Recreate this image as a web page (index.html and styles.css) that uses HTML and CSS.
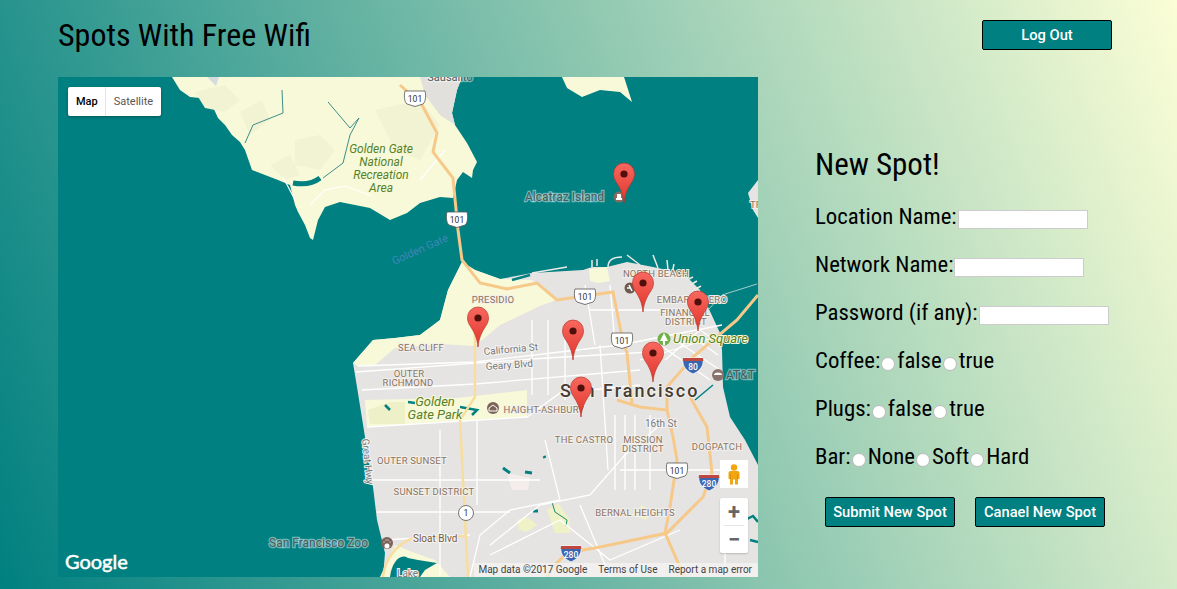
FILE: index.html
```html
<!DOCTYPE html>
<html lang="en">
<head>
  <meta charset="UTF-8">
  <meta name="viewport" content="width=device-width, initial-scale=1.0">
  <title>Spots With Free Wifi</title>
  <link rel="stylesheet" href="styles.css">
</head>
<body>
  <header class="top-bar">
    <h1 class="page-title">Spots With Free Wifi</h1>
    <button type="button" class="btn btn-logout">Log Out</button>
  </header>
  <main class="content">
    <section class="map">
      <svg class="map-canvas" viewBox="58 77 700 500" width="700" height="500" xmlns="http://www.w3.org/2000/svg">
        <defs>
          <linearGradient id="pinFill" x1="0" y1="0" x2="0" y2="1">
            <stop offset="0" stop-color="#f8685f"/>
            <stop offset="1" stop-color="#e0352b"/>
          </linearGradient>
          <g id="pin">
            <path d="M0 40C-1 30-4 25-7.500 19.500C-9.500 16.500-10.500 14-10.500 10.500A10.500 10.500 0 0 1 10.500 10.500C10.500 14 9.500 16.500 7.500 19.500C4 25 1 30 0 40Z" fill="url(#pinFill)" stroke="#b8352c" stroke-width=".7"/>
            <circle cx="0" cy="11" r="3.600" fill="#4f0f0c"/>
          </g>
          <g id="us101">
            <path d="M-10-7H10C11-4 11 4 8 6L0 8.500L-8 6C-11 4-11-4-10-7Z" fill="#fff" stroke="#555" stroke-width=".8"/>
            <text class="shield-text" y="3.500">101</text>
          </g>
          <g id="inter">
            <path d="M-10-7H10C11-1 9 5 0 9C-9 5-11-1-10-7Z" fill="#3a66b0" stroke="#fff" stroke-width=".8"/>
            <path d="M-10-7H10L10.300-4H-10.300Z" fill="#c0473f"/>
          </g>
        </defs>

        <rect x="58" y="77" width="700" height="500" fill="#008080"/>

        <!-- marin headlands -->
        <path d="M172 77L180 90L190 97L200 98L212 105L218 118L225 125L232 135L240 142L245 150L252 170L265 175L278 180L290 185L295 205L298 212L305 225L310 238L313 240L318 220L325 207L340 202L370 208L390 220L407 213L420 203L440 197L453 198L457 180L463 172L472 178L473 170L477 162L467 143L455 125L452 113L457 90L462 77Z" fill="#f8f9d8"/>
        <path d="M195 92L225 85L240 100L225 112L205 108ZM240 112L262 100L270 120L250 135ZM295 140L320 135L335 150L320 170L295 165ZM375 110L420 100L440 125L420 160L395 150ZM270 165L290 155L300 175L285 180Z" fill="#f2f3d2"/>
        <path d="M420 77H462L457 90L452 113L455 125L440 115L425 95Z" fill="#e1e0dd"/>
        <path d="M283 177L295 200M310 205L325 190L345 186L372 196M420 180L445 150" stroke="#fff" stroke-width="1.200" fill="none"/>
        <path d="M293 183Q310 186 320 178" stroke="#008080" stroke-width="5" fill="none"/>
        <path d="M282 90L283 113L253 125L245 143M328 102L350 128L359 118L350 135L343 163L323 178" stroke="#3e8e8a" stroke-width="1" fill="none"/>

        <!-- angel island, treasure island edge -->
        <path d="M562 77L567 88L582 97L600 90L620 92L632 102L625 80L624 77Z" fill="#f8f9d8"/>
        <path d="M758 180L748 193L753 210L758 218Z" fill="#e6e4e2"/>
        <path d="M207 77L216 86L219 77Z" fill="#d5dce0"/>

        <!-- san francisco land -->
        <path d="M462 262L475 270L500 279L532 273L583 270L592 267L607 267L627 262L653 267L667 270L687 277L700 290L708 307L720 333L722 350L723 387L730 417L745 440L758 465V577H383L385 553L377 520L373 487L365 437L357 387L353 363L373 340L395 338L420 335L440 320L448 290Z" fill="#e6e4e2"/>
        <path d="M462 262L475 270L500 279L532 280L556 300L540 306L500 325L475 346L440 344L395 348L375 365L358 366L353 363L373 340L395 338L420 335L440 320L448 290Z" fill="#f8f9d8"/>
        <path d="M589 269L607 267L610 281L598 283L590 281Z" fill="#f8f9d8"/>
        <path d="M365 400L457 398L527 390L527 417L367 427Z" fill="#f8f9d8"/>
        <path d="M368 410L390 402H405V424H370Z" fill="#eef0c8"/>
        <path d="M385 405L390 410M408 402L415 403M460 407L477 410L472 415" stroke="#008080" stroke-width="2.500" fill="none"/>
        <path d="M507 473L530 478L528 490L512 490Z" fill="#f4edec"/>
        <path d="M517 520L527 517L537 525L527 532L519 530ZM547 510L558 503L570 520L570 533L555 533Z" fill="#eff2c6"/>
        <path d="M632 515L642 505L652 512L646 520Z" fill="#eff2c6"/>
        <path d="M503 468L510 473M525 472L532 473M544 456L545 458M533 511L538 511" stroke="#008080" stroke-width="3" fill="none"/>
        <path d="M552 502L555 512L567 520L566 526" stroke="#1d8c70" stroke-width="1" fill="none"/>
        <path d="M395 545L380 577H450L435 560L415 553Z" fill="#f8f9d8"/>
        <path d="M390 577C392 562 400 553 408 558L418 560L437 563L425 570L420 577Z" fill="#008080"/>

        <!-- water inlets and piers -->
        <path d="M512 280L530 275" stroke="#008080" stroke-width="2.500" fill="none"/>
        <path d="M695 400L713 385" stroke="#008080" stroke-width="1.500" fill="none"/>
        <path d="M745 520l8-4l5 6M750 540l8 2" stroke="#008080" stroke-width="2.500" fill="none"/>
        <path d="M532 273L567 267M592 267V260M597 266V259M608 267C608 260 613 257 622 257M627 255L640 265M653 255L658 268M667 260L668 270M674 264L672 274M687 280L693 277M690 285L697 281M694 290L701 286" stroke="#eceae8" stroke-width="1.500" fill="none"/>
        <path d="M708 310L722 295L757 284" stroke="#cfe0e0" stroke-width=".8" fill="none"/>

        <!-- surface streets -->
        <g class="street">
          <path d="M358 366L475 362L560 352L620 345L722 325"/>
          <path d="M356 372L547 358L650 352"/>
          <path d="M362 390L475 384L640 370"/>
          <path d="M367 427L527 417L560 393L640 385"/>
          <path d="M372 480H540"/>
          <path d="M377 512H510"/>
          <path d="M383 540L470 535"/>
          <path d="M477 420V505M440 430V575M532 320V395"/>
          <path d="M548 320V395M565 340V400M600 345L608 470"/>
          <path d="M490 545L540 505L590 495L625 455L660 425"/>
          <path d="M490 555L560 520L610 560L680 530"/>
          <path d="M545 440L560 500L510 510L480 535L470 577"/>
          <path d="M620 470H725M615 415V490M625 415V490M635 415V490M650 415V490"/>
          <path d="M640 360L722 335M660 345L710 380M675 340L720 370M690 335L718 355M700 330L722 345M665 360L700 330"/>
          <path d="M585 285L595 345M610 285L615 345M590 310H660"/>
          <path d="M725 500V577M580 505L610 577"/>
        </g>

        <!-- highways -->
        <g class="highway">
          <path d="M400 85L422 105L437 133L433 152L453 178L458 230L462 260L480 283L507 289L537 283L557 300L613 292L622 337L627 353L632 403"/>
          <path d="M617 400L640 407L667 410L673 437L677 460L670 507L665 533L680 567L685 577"/>
          <path d="M758 295L737 320L693 357L667 387L667 410"/>
          <path d="M690 397L707 427L712 473L703 497L667 533L600 547L567 553L553 567L547 577"/>
        </g>
        <path class="highway-minor" d="M475 320V397L460 420L468 577M383 577C385 560 395 545 413 538L467 536"/>

        <!-- place labels -->
        <text class="hood" x="493" y="303" text-anchor="middle">PRESIDIO</text>
        <text class="hood" x="421" y="351" text-anchor="middle">SEA CLIFF</text>
        <text class="hood" x="409" y="377" text-anchor="middle">OUTER</text>
        <text class="hood" x="408" y="386" text-anchor="middle">RICHMOND</text>
        <text class="hood" x="412" y="464" text-anchor="middle">OUTER SUNSET</text>
        <text class="hood" x="434" y="495" text-anchor="middle">SUNSET DISTRICT</text>
        <text class="hood" x="544" y="413" text-anchor="middle">HAIGHT-ASHBURY</text>
        <text class="hood" x="584" y="443" text-anchor="middle">THE CASTRO</text>
        <text class="hood" x="643" y="443" text-anchor="middle">MISSION</text>
        <text class="hood" x="643" y="452" text-anchor="middle">DISTRICT</text>
        <text class="hood" x="717" y="450" text-anchor="middle">DOGPATCH</text>
        <text class="hood" x="635" y="516" text-anchor="middle">BERNAL HEIGHTS</text>
        <text class="hood" x="656" y="277" text-anchor="middle">NORTH BEACH</text>
        <text class="hood" x="692" y="303" text-anchor="middle">EMBARCADERO</text>
        <text class="hood" x="685" y="316" text-anchor="middle">FINANCIAL</text>
        <text class="hood" x="686" y="325" text-anchor="middle">DISTRICT</text>
        <text class="hood" x="750" y="208">TR</text>
        <text class="street-name" x="484" y="355" transform="rotate(-5 484 355)">California St</text>
        <text class="street-name" x="486" y="370" transform="rotate(-4 486 370)">Geary Blvd</text>
        <text class="street-name" x="645" y="427">16th St</text>
        <text class="street-name" x="362" y="439" transform="rotate(84 362 439)">Great Hwy</text>
        <text class="street-name dark" x="413" y="542">Sloat Blvd</text>
        <text class="park" x="381" y="153" text-anchor="middle">Golden Gate</text>
        <text class="park" x="381" y="166" text-anchor="middle">National</text>
        <text class="park" x="381" y="179" text-anchor="middle">Recreation</text>
        <text class="park" x="381" y="192" text-anchor="middle">Area</text>
        <text class="park park-big" x="435" y="406" text-anchor="middle">Golden</text>
        <text class="park park-big" x="435" y="419" text-anchor="middle">Gate Park</text>
        <text class="park park-big" x="673" y="343">Union Square</text>
        <text class="water-name" x="394" y="265" transform="rotate(-24 394 265)">Golden Gate</text>
        <text class="poi" x="525" y="201">Alcatraz Island</text>
        <text class="poi" x="269" y="547">San Francisco Zoo</text>
        <text class="poi" x="726" y="379">AT&amp;T</text>
        <text class="city" x="560" y="397">San Francisco</text>
        <text class="poi poi-small" x="450" y="81" text-anchor="middle">Sausalito</text>
        <text class="street-name" x="397" y="577">Lake</text>

        <!-- poi icons -->
        <circle cx="619" cy="197" r="5.500" fill="#8a6a5e"/>
        <path d="M616 200H622V198H621V194H617V198H616Z" fill="#fff"/>
        <circle cx="630" cy="288" r="5.500" fill="#6f5a50"/>
        <path d="M627 288h3M629 285l3 6" stroke="#fff" stroke-width="1.500"/>
        <circle cx="493" cy="408" r="6" fill="#7c6358"/>
        <path d="M489 408L493 405L497 408V411H489Z" fill="none" stroke="#fff" stroke-width="1"/>
        <circle cx="387" cy="543" r="6" fill="#7c6358"/>
        <path d="M387 544a2 2 0 1 0 .01 0M384 542h.1M386 540h.1M388 540h.1M390 542h.1" fill="#fff" stroke="#fff" stroke-width="1.200" stroke-linecap="round"/>
        <circle cx="718" cy="375" r="6" fill="#8a736a"/>
        <path d="M714 375a4 2.500 0 0 1 8 0Z" fill="#fff"/>
        <circle cx="664" cy="339" r="6.500" fill="#6fb24a"/>
        <path d="M664 333L668 341H665V345H663V341H660Z" fill="#fff"/>

        <!-- shields -->
        <use href="#us101" x="415" y="98"/>
        <use href="#us101" x="457" y="219"/>
        <use href="#us101" x="585" y="296"/>
        <use href="#us101" x="622" y="340"/>
        <use href="#us101" x="677" y="470"/>
        <circle cx="466" cy="513" r="7.500" fill="#fff" stroke="#555" stroke-width=".8"/>
        <text class="shield-text" x="466" y="516">1</text>
        <use href="#inter" x="693" y="365"/>
        <text class="shield-text white" x="693" y="369.500">80</text>
        <use href="#inter" x="709" y="482"/>
        <text class="shield-text white" x="709" y="486.500">280</text>
        <use href="#inter" x="571" y="553"/>
        <text class="shield-text white" x="571" y="557.500">280</text>

        <!-- markers, tip of each pin is the location -->
        <use href="#pin" x="624" y="163"/>
        <use href="#pin" x="643" y="272"/>
        <use href="#pin" x="698" y="291"/>
        <use href="#pin" x="478" y="307"/>
        <use href="#pin" x="573" y="320"/>
        <use href="#pin" x="653" y="342"/>
        <use href="#pin" x="581" y="377"/>

        <text class="google" x="65" y="569">Google</text>
      </svg>

      <div class="map-type">
        <span class="map-type-item active">Map</span>
        <span class="map-type-item">Satellite</span>
      </div>
      <div class="pegman">
        <svg width="12" height="21" viewBox="0 0 12 21" xmlns="http://www.w3.org/2000/svg">
          <circle cx="6" cy="3.500" r="3.200" fill="#f2a50f"/>
          <path d="M2.500 7H9.500C11 7 11.500 8 11.500 9.500V15H10V20.500H7V15.500H5V20.500H2V15H.5V9.500C.5 8 1 7 2.500 7Z" fill="#f2a50f"/>
          <path d="M2.500 10V15M9.500 10V15" stroke="#c4820a" stroke-width=".6"/>
        </svg>
      </div>
      <div class="zoom-box">
        <span class="zoom-btn">+</span>
        <span class="zoom-line"></span>
        <span class="zoom-btn">&minus;</span>
      </div>
      <div class="map-footer">
        <span>Map data ©2017 Google</span>
        <span>Terms of Use</span>
        <span>Report a map error</span>
      </div>
    </section>

    <form class="spot-form">
      <h2 class="form-title">New Spot!</h2>
      <div class="form-row">Location Name:<input type="text" class="text-field"></div>
      <div class="form-row">Network Name:<input type="text" class="text-field"></div>
      <div class="form-row">Password (if any):<input type="text" class="text-field"></div>
      <div class="form-row">Coffee:<input type="radio" name="coffee" class="radio">false<input type="radio" name="coffee" class="radio">true</div>
      <div class="form-row">Plugs:<input type="radio" name="plugs" class="radio">false<input type="radio" name="plugs" class="radio">true</div>
      <div class="form-row">Bar:<input type="radio" name="bar" class="radio">None<input type="radio" name="bar" class="radio">Soft<input type="radio" name="bar" class="radio">Hard</div>
      <div class="form-buttons">
        <button type="button" class="btn">Submit New Spot</button>
        <button type="button" class="btn">Canael New Spot</button>
      </div>
    </form>
  </main>
</body>
</html>
```

FILE: styles.css
```css
html, body {
  height: 100%;
}
body {
  margin: 0;
  overflow: hidden;
  font-family: Roboto, sans-serif;
  font-stretch: 75%;
  color: #000;
  background: linear-gradient(70deg, #008080, #fbfed6);
}
.top-bar {
  display: flex;
  justify-content: space-between;
  align-items: flex-start;
  height: 77px;
  padding: 0 65px 0 58px;
  box-sizing: border-box;
}
.page-title {
  margin: 14px 0 0;
  font-size: 32px;
  font-stretch: 85%;
  line-height: 42px;
  font-weight: 400;
}
.btn {
  width: 130px;
  height: 30px;
  padding: 0;
  background-color: #008080;
  color: #fff;
  border: 1px solid #000;
  border-radius: 2px;
  font-family: Roboto, sans-serif;
  font-stretch: 100%;
  font-size: 14.700px;
  font-weight: 500;
  cursor: pointer;
}
.btn-logout {
  margin-top: 20px;
}
.content {
  display: flex;
  padding-left: 58px;
}
.map {
  position: relative;
  width: 700px;
  height: 500px;
  overflow: hidden;
  flex-shrink: 0;
  font-stretch: 100%;
}
.map-canvas {
  display: block;
  font-family: Roboto, sans-serif;
}
.street path {
  fill: none;
  stroke: #fff;
  stroke-width: 1.300;
}
.highway path {
  fill: none;
  stroke: #f6c98a;
  stroke-width: 3;
}
.highway-minor {
  fill: none;
  stroke: #f7dd9f;
  stroke-width: 2.500;
}
.hood {
  font-size: 9.500px;
  fill: #8b735f;
  stroke: #f2f0ec;
  stroke-width: 2px;
  paint-order: stroke;
  letter-spacing: .2px;
}
.street-name {
  font-size: 10px;
  fill: #777;
  stroke: #f5f5f5;
  stroke-width: 2px;
  paint-order: stroke;
}
.street-name.dark {
  fill: #7a5a35;
}
.park {
  font-size: 12px;
  font-style: italic;
  fill: #56822a;
}
.park-big {
  font-size: 13px;
  stroke: #f8f9d8;
  stroke-width: 2px;
  paint-order: stroke;
}
.water-name {
  font-size: 11px;
  fill: #3f86b8;
}
.poi {
  font-size: 12px;
  fill: #4f5a5a;
  stroke: rgba(255, 255, 255, 0.45);
  stroke-width: 2.500px;
  paint-order: stroke;
}
.poi-small {
  font-size: 11px;
}
.city {
  font-size: 18px;
  font-weight: 500;
  letter-spacing: 2px;
  fill: #463c34;
  stroke: #f2f0ec;
  stroke-width: 2px;
  paint-order: stroke;
}
.shield-text {
  font-size: 8.500px;
  fill: #333;
  text-anchor: middle;
}
.shield-text.white {
  font-weight: 500;
  fill: #fff;
}
.google {
  font-family: Lato, sans-serif;
  font-size: 20px;
  font-weight: 400;
  fill: #fff;
  stroke: #fff;
  stroke-width: .5px;
}
.map-type {
  position: absolute;
  left: 10px;
  top: 10px;
  display: flex;
  height: 29px;
  background: #fff;
  border-radius: 2px;
  font-family: Roboto, sans-serif;
  font-size: 11px;
  line-height: 29px;
  box-shadow: 0 1px 3px rgba(0, 0, 0, 0.3);
}
.map-type-item {
  padding: 0 8px;
  color: #565656;
}
.map-type-item.active {
  color: #000;
  font-weight: 500;
  padding-right: 7px;
  border-right: 1px solid #e6e6e6;
}
.pegman {
  position: absolute;
  left: 662px;
  top: 383px;
  display: flex;
  align-items: center;
  justify-content: center;
  width: 28px;
  height: 28px;
  background: #fff;
}
.zoom-box {
  position: absolute;
  left: 662px;
  top: 421px;
  display: flex;
  flex-direction: column;
  width: 28px;
  height: 55px;
  background: #fff;
  border-radius: 2px;
  box-shadow: 0 1px 2px rgba(0, 0, 0, 0.2);
}
.zoom-btn {
  height: 27px;
  font-family: Roboto, sans-serif;
  font-size: 22px;
  font-weight: 700;
  line-height: 27px;
  text-align: center;
  color: #666;
}
.zoom-line {
  height: 1px;
  margin: 0 4px;
  background: #e6e6e6;
}
.map-footer {
  position: absolute;
  right: 0;
  bottom: 0;
  display: flex;
  gap: 11px;
  padding: 0 6px 0 4px;
  height: 14px;
  background: rgba(245, 245, 245, 0.7);
  font-family: Roboto, sans-serif;
  font-size: 10px;
  line-height: 14px;
  color: #444;
}
.spot-form {
  margin-left: 57px;
  padding-top: 64px;
}
.form-title {
  margin: 0 0 4px;
  font-size: 31px;
  line-height: 48px;
  font-weight: 400;
}
.form-row {
  height: 48px;
  font-size: 22.800px;
  line-height: 48px;
  white-space: nowrap;
}
.text-field {
  width: 130px;
  height: 19px;
  margin: 0 0 0 1px;
  padding: 1px 2px;
  box-sizing: border-box;
  background: #fff;
  border: 1px solid #ccc;
  font-size: 13px;
}
.radio {
  appearance: none;
  width: 14px;
  height: 14px;
  margin: 0 2px 0 1px;
  vertical-align: -3px;
  background: #fff;
  border: 1px solid #bbb;
  border-radius: 50%;
}
.form-buttons {
  display: flex;
  gap: 20px;
  margin-top: 16px;
  padding-left: 10px;
}
```
